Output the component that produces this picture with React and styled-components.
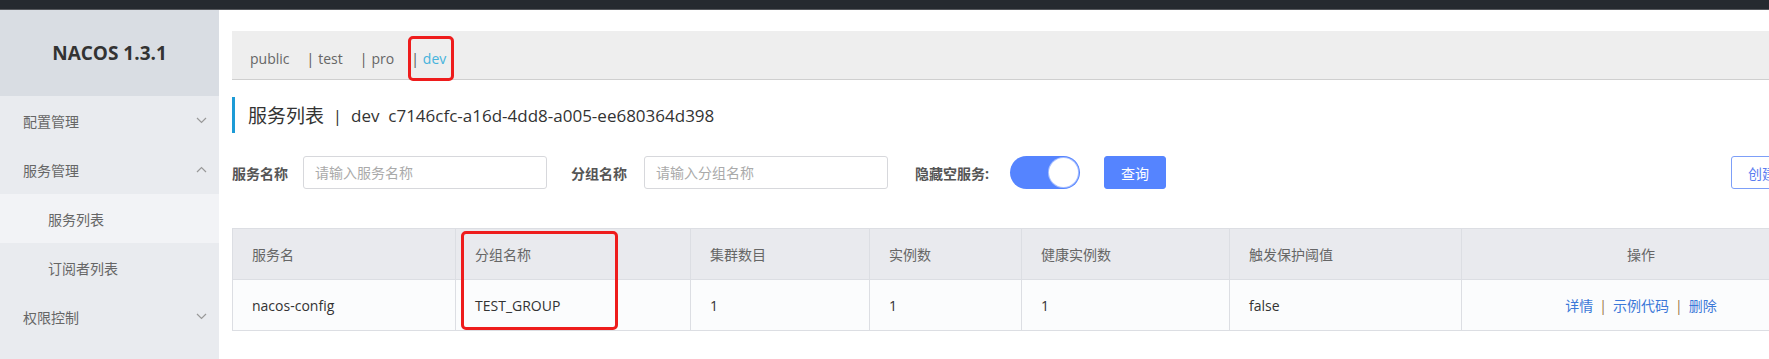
import styled, { createGlobalStyle } from "styled-components";

const GlobalStyle = createGlobalStyle`
  html, body {
    margin: 0;
    padding: 0;
    overflow: hidden;
    background: #fff;
  }
  body {
    font-family: "Open Sans", "Noto Sans CJK SC", sans-serif;
    font-size: 14px;
    color: #333;
  }
`;

const Page = styled.div`
  width: 1850px;
  height: 359px;
  display: flex;
  flex-direction: column;
`;
const TopBar = styled.div`
  height: 9px;
  background: #252a2f;
  border-bottom: 1px solid #55585c;
`;
const Body = styled.div`
  flex: 1;
  display: flex;
`;

const Sidebar = styled.div`
  width: 219px;
  flex: none;
  background: #e9ebef;
  display: flex;
  flex-direction: column;
`;
const Logo = styled.div`
  height: 86px;
  background: #d9dde3;
  display: flex;
  align-items: center;
  justify-content: center;
  font-family: "Open Sans", sans-serif;
  font-weight: 700;
  font-size: 19px;
  color: #333;
`;
const Menu = styled.div`
  padding-top: 0;
`;
const MenuItem = styled.div`
  height: 49px;
  display: flex;
  align-items: center;
  justify-content: space-between;
  padding: 0 12px 0 ${(p) => (p.$sub ? 48 : 23)}px;
  background: ${(p) => (p.$active ? "#f2f3f6" : "transparent")};
  color: #666;
  font-size: 14px;
`;

const Main = styled.div`
  flex: 1;
  padding: 21px 29px 0 13px;
`;
const NsBar = styled.div`
  height: 49px;
  background: #eeeeee;
  border-bottom: 1px solid #cfcfcf;
  display: flex;
  align-items: center;
  padding: 6px 0 0 18px;
  box-sizing: border-box;
`;
const NsTab = styled.span`
  font-size: 14px;
  color: ${(p) => (p.$current ? "#46b3dc" : "#666")};
  margin-right: 17px;
`;
const Sep = styled.span`
  color: #555;
  margin-right: 4px;
`;
const Mark = styled.span`
  border: 3px solid #ee1c1c;
  border-radius: 5px;
  padding: 10px 5px 10px 0;
  margin-left: -3px;
`;

const Title = styled.div`
  margin-top: 17px;
  height: 36px;
  border-left: 3px solid #1d9bd6;
  padding-left: 13px;
  display: flex;
  align-items: center;
  font-size: 17px;
  color: #333;
  white-space: pre;
`;
const TitleName = styled.span`
  font-size: 19px;
`;

const FormRow = styled.div`
  margin-top: 23px;
  display: flex;
  align-items: center;
`;
const Label = styled.span`
  font-weight: 700;
  font-size: 14px;
  color: #555;
  margin-right: ${(p) => p.$gap || 15}px;
`;
const Input = styled.input`
  width: 244px;
  height: 33px;
  box-sizing: border-box;
  border: 1px solid #d7d8dc;
  border-radius: 3px;
  padding: 0 11px;
  font-family: inherit;
  font-size: 14px;
  margin-right: ${(p) => p.$gap || 27}px;
  outline: none;
  &::placeholder {
    color: #aaa;
  }
`;
const Switch = styled.div`
  width: 70px;
  height: 33px;
  border-radius: 17px;
  background: #5584ff;
  display: flex;
  align-items: center;
  justify-content: flex-end;
  padding: 0 2px;
  box-sizing: border-box;
  margin-right: 24px;
`;
const Knob = styled.div`
  width: 29px;
  height: 29px;
  border-radius: 50%;
  background: #fff;
  box-shadow: 0 0 0 1px #a9c0ff;
`;
const Button = styled.button`
  height: 33px;
  box-sizing: border-box;
  padding: 0 16px;
  border-radius: 3px;
  font-family: inherit;
  font-size: 14px;
  border: 1px solid ${(p) => (p.$ghost ? "#7d9ff8" : "#5584ff")};
  background: ${(p) => (p.$ghost ? "#fff" : "#5584ff")};
  color: ${(p) => (p.$ghost ? "#5a7cf0" : "#fff")};
  margin-left: ${(p) => (p.$ghost ? "auto" : "0")};
`;

const TableWrap = styled.div`
  margin-top: 39px;
  position: relative;
`;
const Table = styled.table`
  width: 100%;
  table-layout: fixed;
  border-collapse: collapse;
  border: 1px solid #dcdee3;
`;
const Th = styled.th`
  height: 50px;
  background: #e9eaee;
  color: #666;
  font-weight: 400;
  font-size: 14px;
  text-align: ${(p) => p.$align || "left"};
  padding: 0 19px;
  border: 1px solid #dcdee3;
`;
const Td = styled.td`
  height: 50px;
  background: #fbfcfd;
  color: #333;
  font-size: 14px;
  text-align: ${(p) => p.$align || "left"};
  padding: 0 19px;
  border: 1px solid #dcdee3;
`;
const Link = styled.a`
  color: #3b78d8;
  text-decoration: none;
`;
const LinkSep = styled.span`
  color: #9a7446;
  margin: 0 6px;
`;
const ColumnMark = styled.div`
  position: absolute;
  left: 229px;
  top: 3px;
  width: 157px;
  height: 99px;
  box-sizing: border-box;
  border: 3px solid #ee1c1c;
  border-radius: 5px;
  pointer-events: none;
`;

const Chevron = ({ up }) => (
  <svg width="11" height="7" viewBox="0 0 11 7" fill="none">
    <path
      d={up ? "M1 6L5.5 1.5L10 6" : "M1 1L5.5 5.5L10 1"}
      stroke="#999"
      strokeWidth="1.2"
    />
  </svg>
);

const columns = [
  { name: "服务名", width: 223 },
  { name: "分组名称", width: 235 },
  { name: "集群数目", width: 179 },
  { name: "实例数", width: 152 },
  { name: "健康实例数", width: 208 },
  { name: "触发保护阈值", width: 232 },
  { name: "操作", align: "center" },
];

const row = ["nacos-config", "TEST_GROUP", "1", "1", "1", "false"];

const App = () => {
  return (
    <Page>
      <GlobalStyle />
      <TopBar />
      <Body>
        <Sidebar>
          <Logo>NACOS 1.3.1</Logo>
          <Menu>
            <MenuItem>
              配置管理 <Chevron />
            </MenuItem>
            <MenuItem>
              服务管理 <Chevron up />
            </MenuItem>
            <MenuItem $sub $active>
              服务列表
            </MenuItem>
            <MenuItem $sub>订阅者列表</MenuItem>
            <MenuItem>
              权限控制 <Chevron />
            </MenuItem>
          </Menu>
        </Sidebar>
        <Main>
          <NsBar>
            <NsTab>public</NsTab>
            <NsTab>
              <Sep>|</Sep>test
            </NsTab>
            <NsTab>
              <Sep>|</Sep>pro
            </NsTab>
            <NsTab $current>
              <Mark>
                <Sep>|</Sep>dev
              </Mark>
            </NsTab>
          </NsBar>
          <Title>
            <TitleName>服务列表</TitleName>  |  dev  c7146cfc-a16d-4dd8-a005-ee680364d398
          </Title>
          <FormRow>
            <Label>服务名称</Label>
            <Input placeholder="请输入服务名称" $gap={24} />
            <Label $gap={17}>分组名称</Label>
            <Input placeholder="请输入分组名称" />
            <Label $gap={21}>隐藏空服务:</Label>
            <Switch>
              <Knob />
            </Switch>
            <Button>查询</Button>
            <Button $ghost>创建服务</Button>
          </FormRow>
          <TableWrap>
            <Table>
              <colgroup>
                {columns.map((c) => (
                  <col key={c.name} style={c.width ? { width: c.width } : undefined} />
                ))}
              </colgroup>
              <thead>
                <tr>
                  {columns.map((c) => (
                    <Th key={c.name} $align={c.align}>
                      {c.name}
                    </Th>
                  ))}
                </tr>
              </thead>
              <tbody>
                <tr>
                  {row.map((v, i) => (
                    <Td key={i}>{v}</Td>
                  ))}
                  <Td $align="center">
                    <Link>详情</Link>
                    <LinkSep>|</LinkSep>
                    <Link>示例代码</Link>
                    <LinkSep>|</LinkSep>
                    <Link>删除</Link>
                  </Td>
                </tr>
              </tbody>
            </Table>
            <ColumnMark />
          </TableWrap>
        </Main>
      </Body>
    </Page>
  );
};

export default App;
